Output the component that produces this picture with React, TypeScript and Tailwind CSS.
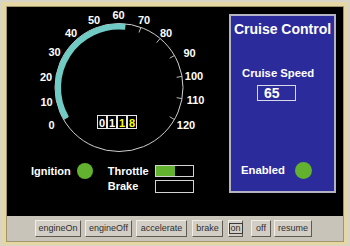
import React from "react";

const CX = 112;
const CY = 80.5;

function pt(v: number, r: number): [number, number] {
  const a = ((210 - 2 * v) * Math.PI) / 180;
  return [CX + r * Math.cos(a), CY - r * Math.sin(a)];
}

const labels: [string, number, number][] = [
  ["0", 44.5, 118],
  ["10", 39.5, 94.5],
  ["20", 39, 69.5],
  ["30", 47.5, 44.5],
  ["40", 64, 25.5],
  ["50", 87, 12.5],
  ["60", 111.5, 8],
  ["70", 137, 12.5],
  ["80", 159, 26],
  ["90", 182.5, 46],
  ["100", 187, 69],
  ["110", 188.5, 93],
  ["120", 179, 118],
];

function Gauge({ speed }: { speed: number }) {
  const [sx, sy] = pt(0, 61);
  const [ex, ey] = pt(speed, 61);
  const ticks = [0, 10, 20, 30, 40, 50, 60, 70, 80, 90, 100, 110, 120];
  const digits = ["0", "1", "1", "8"];
  return (
    <svg width="222" height="150" viewBox="0 0 222 150" className="block">
      <circle cx={CX} cy={CY} r={64} fill="none" stroke="#cfcfcf" strokeWidth={1} />
      {ticks.map((t) => {
        const [x1, y1] = pt(t, 58.5);
        const [x2, y2] = pt(t, 64);
        return <line key={t} x1={x1} y1={y1} x2={x2} y2={y2} stroke="#bdbdbd" strokeWidth={1} />;
      })}
      <path
        d={`M${sx} ${sy} A61 61 0 0 1 ${ex} ${ey}`}
        fill="none"
        stroke="#6fcbc3"
        strokeWidth={6}
      />
      {labels.map(([t, x, y]) => (
        <text
          key={t}
          x={x}
          y={y}
          fill="#ffffff"
          fontSize="11"
          fontWeight="bold"
          fontFamily="'Liberation Sans', Arial, sans-serif"
          textAnchor="middle"
          dominantBaseline="central"
        >
          {t}
        </text>
      ))}
      {digits.map((d, i) => (
        <g key={i}>
          <rect x={90.5 + i * 10} y={108.5} width={9} height={13} fill="#000" stroke="#e8e8e8" strokeWidth={1} />
          <text
            x={95 + i * 10}
            y={115.5}
            fill={i < 2 ? "#ffffff" : "#ffff00"}
            fontSize="11"
            fontWeight="bold"
            fontFamily="'Liberation Sans', Arial, sans-serif"
            textAnchor="middle"
            dominantBaseline="central"
          >
            {d}
          </text>
        </g>
      ))}
    </svg>
  );
}

const buttons: { label: string; cls: string; focus?: boolean }[] = [
  { label: "engineOn", cls: "w-[46px] ml-0" },
  { label: "engineOff", cls: "w-[47px] ml-[4px]" },
  { label: "accelerate", cls: "w-[51px] ml-[4px]" },
  { label: "brake", cls: "w-[31px] ml-[5px]" },
  { label: "on", cls: "w-[15px] ml-[5px]", focus: true },
  { label: "off", cls: "w-[20px] ml-[8px]" },
  { label: "resume", cls: "w-[38px] ml-[3px]" },
];

export default function App() {
  return (
    <div className="w-[350px] h-[246px] bg-[#d9d4c8] pt-[2px] pl-[2px] pr-[2px] pb-[1px] font-['Liberation_Sans',Arial,sans-serif]">
      <div className="w-full h-full bg-[#e4d7a3] pt-[4px] pl-[4px] pr-[4px] pb-[3px]">
        <div className="w-full h-full border border-[#a3956b] flex flex-col">
          <div className="h-[209px] bg-black flex flex-row">
            <div className="w-[222px] flex flex-col">
              <Gauge speed={63} />
              <div className="flex items-start mt-[8px]">
                <div className="ml-[24px] h-[12px] flex items-center gap-[6px]">
                  <span className="text-white font-bold text-[11px] leading-none">Ignition</span>
                  <div className="w-[16px] h-[16px] rounded-full bg-[#63b22f] shrink-0" />
                </div>
                <div className="ml-[15px] flex flex-col gap-[3px]">
                  <div className="flex items-center h-[12px]">
                    <span className="w-[47px] text-white font-bold text-[11px] leading-none">Throttle</span>
                    <div className="w-[39px] h-[12px] border border-[#d4d4d4] flex">
                      <div className="w-[19px] h-full bg-[#63b22f]" />
                    </div>
                  </div>
                  <div className="flex items-center h-[13px]">
                    <span className="w-[47px] text-white font-bold text-[11px] leading-none">Brake</span>
                    <div className="w-[39px] h-[13px] border border-[#d4d4d4]" />
                  </div>
                </div>
              </div>
            </div>
            <div className="w-[107px] h-[179px] mt-[7px] bg-[#2b2b9c] border-2 border-[#b3b3c4] flex flex-col">
              <div className="pt-[5px] text-center text-white font-bold text-[14px] leading-[16px]">Cruise Control</div>
              <div className="mt-[30px] ml-[11px] text-white font-bold text-[11.3px] leading-[13px]">Cruise Speed</div>
              <div className="mt-[5px] ml-[26px] w-[39px] h-[16px] border border-[#d8d8e6] pl-[6px] flex items-center">
                <span className="text-white font-bold text-[14px] leading-none">65</span>
              </div>
              <div className="mt-auto mb-[12px] ml-[10px] flex items-center gap-[10px]">
                <span className="text-white font-bold text-[11.3px] leading-none">Enabled</span>
                <div className="w-[17px] h-[17px] rounded-full bg-[#63b22f]" />
              </div>
            </div>
          </div>
          <div className="flex-1 bg-[#c9c4ba] flex items-start pt-[4px] pl-[28px]">
            {buttons.map((b) => (
              <div
                key={b.label}
                className={`${b.cls} h-[17px] bg-[#d3cec5] border border-t-[#f2eee6] border-l-[#f2eee6] border-r-[#5e5a52] border-b-[#5e5a52] flex items-center justify-center text-[9px] text-[#2e2e2e] leading-none`}
              >
                {b.focus ? (
                  <span className="border border-[#3a3a3a] px-[1px] leading-[9px]">{b.label}</span>
                ) : (
                  b.label
                )}
              </div>
            ))}
          </div>
        </div>
      </div>
    </div>
  );
}
